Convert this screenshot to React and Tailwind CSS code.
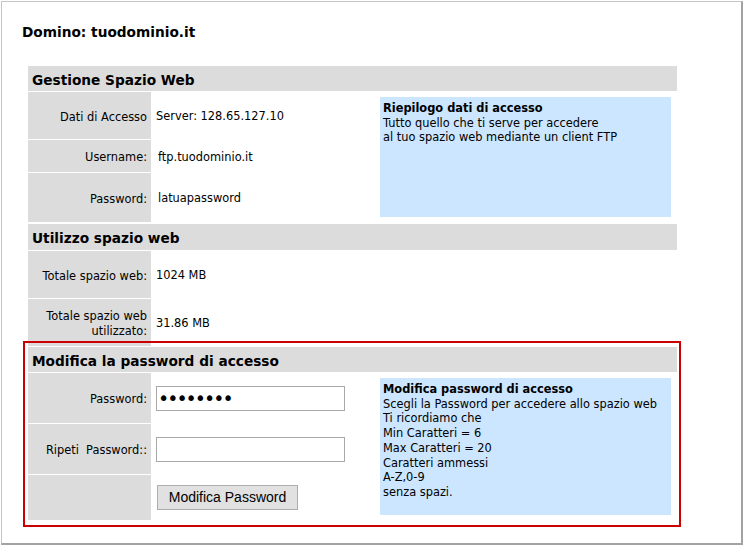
import React from 'react';

const font = { fontFamily: '"DejaVu Sans", Verdana, sans-serif' };

function Header({ children, h = 'h-[25px]' }) {
  return (
    <div className={`${h} bg-[#dcdcdc] pl-[4px] pt-[3px] flex items-center text-[13.7px] font-bold text-black`}>
      {children}
    </div>
  );
}

function Label({ children, h, pt = 'pt-[3px]' }) {
  return (
    <div className={`${h} ${pt} bg-[#dcdcdc] flex items-center justify-end text-right pl-[4px] pr-[4px] leading-[14.7px]`}>
      {children}
    </div>
  );
}

function Value({ children, className = '', pt = 'pt-[3px]' }) {
  return <div className={`flex items-center pl-[5px] ${pt} ${className}`}>{children}</div>;
}

function InfoBox({ title, lines, rows }) {
  return (
    <div className={`${rows} py-[5px] pl-[4px]`}>
      <div className="w-[291px] h-full bg-[#cce6ff] pl-[3px] pt-[4px] leading-[14.7px]">
        <div className="font-bold">{title}</div>
        {lines.map((l) => (
          <div key={l}>{l}</div>
        ))}
      </div>
    </div>
  );
}

export default function App() {
  return (
    <div className="w-[743px] h-[546px] bg-white pt-[1px] pl-[1px] text-[11.4px] text-black" style={font}>
      <div className="w-[742px] h-[544px] border-t border-l border-[#c4c4c4] border-r-2 border-b-2 border-r-[#a2a2a2] border-b-[#a2a2a2]">
        <div className="pt-[20px] ml-[20px] h-[38px] leading-[20px] text-[13.7px] font-bold">Domino: tuodominio.it</div>

        <div className="ml-[21px] mt-[26px] w-[658px]">
          <div className="ml-[5px] w-[649px]">
            <Header>Gestione Spazio Web</Header>
            <div className="mt-[1px] grid grid-cols-[123px_225px_301px] gap-y-[1px]">
              <Label h="h-[47px]">Dati di Accesso</Label>
              <Value>Server: 128.65.127.10</Value>
              <InfoBox
                rows="row-span-3"
                title="Riepilogo dati di accesso"
                lines={['Tutto quello che ti serve per accedere', 'al tuo spazio web mediante un client FTP']}
              />
              <Label h="h-[32px]">Username:</Label>
              <Value className="pl-[7px]">ftp.tuodominio.it</Value>
              <Label h="h-[49px]">Password:</Label>
              <Value className="pl-[7px]">latuapassword</Value>
            </div>

            <div className="mt-[2px]">
              <Header h="h-[26px]">Utilizzo spazio web</Header>
            </div>
            <div className="mt-[1px] grid grid-cols-[123px_526px] gap-y-[1px]">
              <Label h="h-[47px]">Totale spazio web:</Label>
              <Value>1024 MB</Value>
              <Label h="h-[42px]" pt="pt-[8px]">Totale spazio web utilizzato:</Label>
              <Value pt="pt-[8px]">31.86 MB</Value>
            </div>
          </div>

          <div className="border-2 border-[#cc0000] pl-[3px] pr-[2px] pb-[5px]">
            <div className="h-[3px] w-[123px] bg-[#dcdcdc]" />
            <div className="mt-[1px]">
              <Header>Modifica la password di accesso</Header>
            </div>
            <div className="mt-[1px] grid grid-cols-[123px_225px_301px] gap-y-[1px]">
              <Label h="h-[50px]">Password:</Label>
              <Value pt="pt-0">
                <input
                  type="password"
                  readOnly
                  value="password"
                  className="w-[189px] h-[25px] border border-[#a9a9a9] bg-white px-[1px] text-[19px] tracking-[-2px] outline-none"
                  style={font}
                />
              </Value>
              <InfoBox
                rows="row-span-3"
                title="Modifica password di accesso"
                lines={[
                  'Scegli la Password per accedere allo spazio web',
                  'Ti ricordiamo che',
                  'Min Caratteri = 6',
                  'Max Caratteri = 20',
                  'Caratteri ammessi',
                  'A-Z,0-9',
                  'senza spazi.',
                ]}
              />
              <Label h="h-[50px]">{'Ripeti\u00a0 Password::'}</Label>
              <Value pt="pt-0">
                <input
                  type="password"
                  readOnly
                  value=""
                  className="w-[189px] h-[25px] border border-[#a9a9a9] bg-white px-[3px] text-[13px] outline-none"
                />
              </Value>
              <Label h="h-[45px]" />
              <Value pt="pt-0">
                <button
                  type="button"
                  className="ml-[1px] w-[141px] h-[25px] border border-[#adadad] bg-[#e1e1e1] text-[14px] text-black"
                  style={{ fontFamily: '"Liberation Sans", Arial, sans-serif' }}
                >
                  Modifica Password
                </button>
              </Value>
            </div>
          </div>
        </div>
      </div>
    </div>
  );
}
